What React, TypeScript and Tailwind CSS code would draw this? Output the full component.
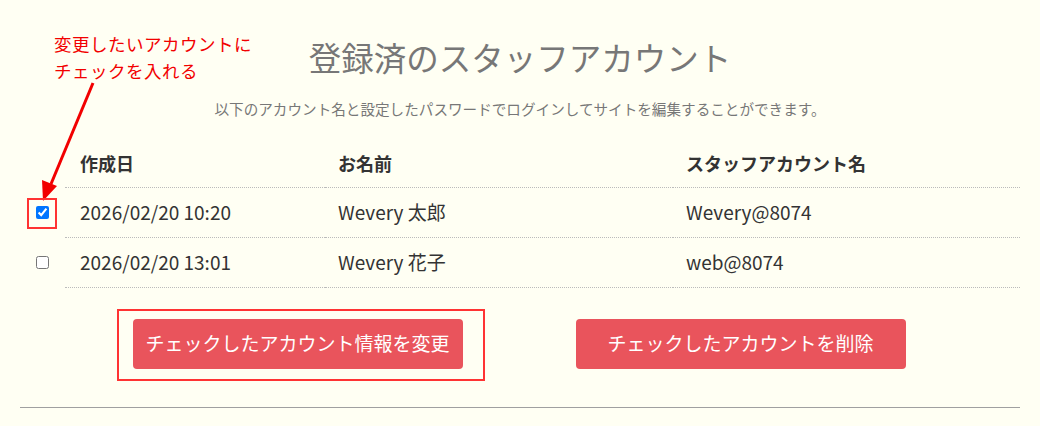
import { useState } from "react";

const accounts = [
  { id: 1, created: "2026/02/20 10:20", name: "Wevery 太郎", login: "Wevery@8074" },
  { id: 2, created: "2026/02/20 13:01", name: "Wevery 花子", login: "web@8074" },
];

export default function App() {
  const [checked, setChecked] = useState<Record<number, boolean>>({ 1: true, 2: false });

  return (
    <div
      className="relative h-[426px] w-[1040px] overflow-hidden bg-[#fffff3] text-[#333]"
      style={{ fontFamily: '"Noto Sans CJK JP", "Noto Sans", sans-serif' }}
    >
      <section className="px-[20px] pt-[28px]">
        <h1 className="text-center text-[32.5px] leading-[58px] font-normal text-[#777]">
          登録済のスタッフアカウント
        </h1>
        <p className="mt-[11px] text-center text-[14.6px] leading-[24px] text-[#777]">
          以下のアカウント名と設定したパスワードでログインしてサイトを編集することができます。
        </p>

        <table className="mt-[19px] w-[1000px] border-collapse text-left">
          <colgroup>
            <col className="w-[45px]" />
            <col className="w-[260px]" />
            <col className="w-[348px]" />
            <col className="w-[347px]" />
          </colgroup>
          <thead>
            <tr className="h-[47px] text-[18px]">
              <th />
              <th className="border-b border-dotted border-[#bbb] pl-[15px] font-bold">作成日</th>
              <th className="border-b border-dotted border-[#bbb] pl-[13px] font-bold">お名前</th>
              <th className="border-b border-dotted border-[#bbb] pl-[13px] font-bold">スタッフアカウント名</th>
            </tr>
          </thead>
          <tbody>
            {accounts.map((a) => (
              <tr key={a.id} className="h-[50px] text-[19px]">
                <td className="pl-[16px]">
                  <input
                    type="checkbox"
                    checked={checked[a.id]}
                    onChange={(e) => setChecked({ ...checked, [a.id]: e.target.checked })}
                    className="m-0 block h-[13px] w-[13px]"
                  />
                </td>
                <td className="border-b border-dotted border-[#bbb] pl-[15px]">{a.created}</td>
                <td className="border-b border-dotted border-[#bbb] pl-[13px]">{a.name}</td>
                <td className="border-b border-dotted border-[#bbb] pl-[13px]">{a.login}</td>
              </tr>
            ))}
          </tbody>
        </table>

        <div className="mt-[31px] flex justify-center gap-[113px] pr-[2px]">
          <button className="h-[50px] w-[330px] rounded-[4px] bg-[#e9545c] text-[19px] text-white">
            チェックしたアカウント情報を変更
          </button>
          <button className="h-[50px] w-[330px] rounded-[4px] bg-[#e9545c] text-[19px] text-white">
            チェックしたアカウントを削除
          </button>
        </div>

        <hr className="mt-[38px] border-0 border-t border-[#a0a0a0]" />
      </section>

      {/* Annotation overlay: note, arrow and highlight boxes */}
      <div className="pointer-events-none absolute left-[54px] top-[30px] text-[17.5px] leading-[27px] tracking-[0.5px] text-[#f20000]">
        <div>変更したいアカウントに</div>
        <div>チェックを入れる</div>
      </div>
      <svg className="pointer-events-none absolute left-0 top-0" width="1040" height="426">
        <line x1="93" y1="83" x2="51" y2="184" stroke="#f20000" strokeWidth="3" />
        <polygon points="43,201 42,180 57,186" fill="#f20000" />
      </svg>
      <div className="pointer-events-none absolute left-[27px] top-[198px] h-[31px] w-[30px] border-2 border-[#f33]" />
      <div className="pointer-events-none absolute left-[117px] top-[309px] h-[72px] w-[368px] border-2 border-[#f33]" />
    </div>
  );
}
